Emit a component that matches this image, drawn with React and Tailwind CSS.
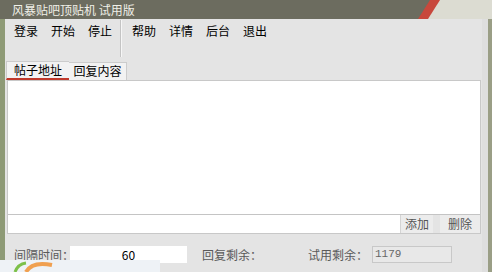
const FONT = { fontFamily: '"Noto Sans CJK SC", "Liberation Sans", sans-serif' };

const MENU_LEFT = ['登录', '开始', '停止'];
const MENU_RIGHT = ['帮助', '详情', '后台', '退出'];

export default function App() {
  return (
    <div
      className="relative w-[492px] h-[272px] overflow-hidden bg-[#e4e4e4] text-[12px] text-black flex flex-col"
      style={FONT}
    >
      {/* 标题栏 */}
      <div className="relative h-[19px] bg-[#6c6c5f] flex items-center pl-[12px] shrink-0">
        <span className="text-[12px] leading-none text-[#f0f0e8]">风暴贴吧顶贴机 试用版</span>
        <svg className="absolute right-0 top-0" width="76" height="19" viewBox="0 0 76 19">
          <polygon points="10,19 22,0 76,0 76,19" fill="#dcdcd2" />
          <polygon points="2,19 14,0 24,0 12,19" fill="#c8483c" />
        </svg>
      </div>

      <div className="flex flex-1">
        <div className="w-[5px] bg-[#8e9a76]" />
        <div className="flex-1 flex flex-col">
          {/* 菜单 */}
          <div className="h-[40px] flex items-start shrink-0">
            <div className="flex gap-[13px] pl-[9px] pt-[5px]">
              {MENU_LEFT.map((m) => (
                <span key={m} className="leading-[14px] whitespace-nowrap">{m}</span>
              ))}
            </div>
            <div className="ml-[8px] mt-[1px] w-[2px] h-[37px] border-l border-[#c4c4c4] bg-[#f6f6f6]" />
            <div className="flex gap-[13px] pl-[10px] pt-[5px]">
              {MENU_RIGHT.map((m) => (
                <span key={m} className="leading-[14px] whitespace-nowrap">{m}</span>
              ))}
            </div>
          </div>

          {/* 标签 */}
          <div className="flex pl-[1px] mt-[2px] h-[19px] items-end shrink-0">
            <div className="box-border h-[19px] w-[63px] text-center bg-[#f2f2f2] border-t border-l border-[#cccccc] border-b-2 border-b-[#c0392b] leading-[16px]">
              帖子地址
            </div>
            <div className="box-border h-[18px] w-[58px] text-center bg-[#f2f2f2] border-t border-r border-[#cccccc] leading-[16px]">
              回复内容
            </div>
          </div>

          {/* 内容区 */}
          <div className="ml-[2px] mr-[1px] flex flex-col border border-[#c8c8c8] shrink-0">
            <div className="h-[134px] bg-white border-b border-[#c4c4c4]" />
            <div className="flex h-[18px]">
              <div className="flex-1 bg-white" />
              <div className="w-[33px] bg-[#ececec] text-[#555] text-center leading-[18px] border-l border-[#d4d4d4]">添加</div>
              <div className="w-[7px] bg-[#e4e4e4]" />
              <div className="w-[40px] bg-[#ececec] text-[#555] text-center leading-[18px]">删除</div>
            </div>
          </div>

          {/* 底部 */}
          <div className="flex items-center h-[17px] mt-[12px] text-[#5a5a5a] whitespace-nowrap shrink-0">
            <span className="pl-[9px] w-[65px]">间隔时间：</span>
            <div className="w-[117px] h-[17px] bg-white text-black text-center leading-[17px]">60</div>
            <span className="ml-[15px] w-[106px]">回复剩余：</span>
            <span className="w-[64px]">试用剩余：</span>
            <div
              className="w-[80px] h-[17px] border border-[#c8c8c8] bg-[#e8e8e8] text-[11px] leading-[15px] pl-[2px] text-[#666]"
              style={{ fontFamily: '"Liberation Mono", monospace' }}
            >
              1179
            </div>
          </div>
        </div>
        <div className="w-[10px] bg-[#dedede] border-r-[4px] border-[#9a9e86]" />
      </div>

      {/* 左下角浮层 */}
      <div className="absolute left-0 bottom-0 w-[160px] h-[12px] bg-[#eef2f6]">
        <svg className="absolute left-[12px] top-0" width="44" height="12" viewBox="0 0 44 12">
          <path d="M3 12 Q6 4 14 3" stroke="#7cc04a" strokeWidth="3" fill="none" />
          <path d="M14 12 Q20 1 40 5" stroke="#f0a050" strokeWidth="4" fill="none" />
        </svg>
      </div>
    </div>
  );
}
